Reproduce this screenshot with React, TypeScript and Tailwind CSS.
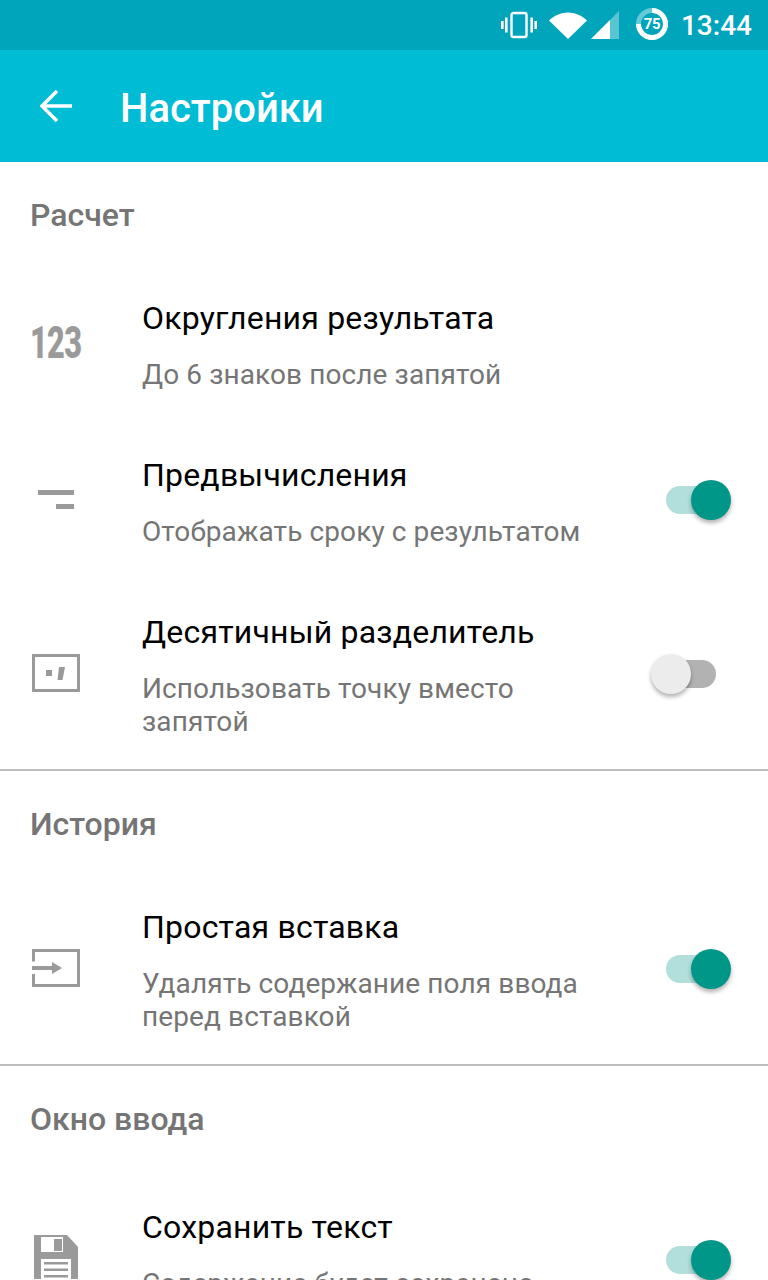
import type { JSX, ReactNode } from 'react';

function Switch({ on, lift }: { on: boolean; lift?: boolean }): JSX.Element {
  return (
    <div className={`relative mr-[52px] h-[28px] w-[50px] shrink-0 rounded-full ${lift ? 'mb-[22px]' : 'mb-[4px]'} ${on ? 'bg-[#b2dfdb]' : 'bg-[#b2b2b2]'}`}>
      <div
        className={`absolute top-[-6px] h-[40px] w-[40px] rounded-full shadow-[0_3px_4px_rgba(0,0,0,0.3)] ${
          on ? 'right-[-15px] bg-[#009688]' : 'left-[-15px] bg-[#ececec]'
        }`}
      />
    </div>
  );
}

function SectionTitle({ children, last }: { children: ReactNode; last?: boolean }): JSX.Element {
  return (
    <div className={`px-[30px] pt-[34px] text-[32px] font-medium leading-[38px] text-[#757575] ${last ? 'pb-[38px]' : 'pb-[33px]'}`}>
      {children}
    </div>
  );
}

function Row({
  icon,
  title,
  sub,
  toggle,
  lift
}: {
  icon: ReactNode;
  title: string;
  sub: string;
  toggle?: boolean;
  lift?: boolean;
}): JSX.Element {
  return (
    <div className="flex items-center pb-[33px] pt-[32px]">
      <div className={`ml-[32px] flex h-[48px] w-[48px] shrink-0 items-center justify-center text-[#9a9a9a] ${lift ? 'mb-[28px]' : 'mb-[5px]'}`}>
        {icon}
      </div>
      <div className="ml-[62px] w-[440px] shrink-0">
        <div className="text-[32px] leading-[38px] tracking-[0.2px] text-black">{title}</div>
        <div className="mt-[21px] text-[28px] leading-[33px] tracking-[0.1px] text-[#757575]">{sub}</div>
      </div>
      {toggle !== undefined ? (
        <div className="ml-auto">
          <Switch on={toggle} lift={lift} />
        </div>
      ) : null}
    </div>
  );
}

function StatusIcons(): JSX.Element {
  return (
    <div className="flex h-[50px] items-center justify-end bg-[#00a5bb] pr-[16px] text-white">
      <svg width="36" height="28" viewBox="0 0 36 28" fill="none">
        <rect x="10.5" y="2" width="15" height="24" rx="2" stroke="white" strokeWidth="2.4" />
        <rect x="0" y="10" width="2.6" height="8" fill="white" />
        <rect x="4" y="6.5" width="2.6" height="15" fill="white" />
        <rect x="29.4" y="6.5" width="2.6" height="15" fill="white" />
        <rect x="33.4" y="10" width="2.6" height="8" fill="white" />
      </svg>
      <svg className="ml-[12px]" width="38" height="28" viewBox="0 0 38 28">
        <path d="M0 9.5C5 4.5 12 1.5 19 1.5S33 4.5 38 9.5L19 28Z" fill="white" />
      </svg>
      <svg className="ml-[4px]" width="28" height="28" viewBox="0 0 28 28">
        <path d="M0 28L28 0V28Z" fill="white" fillOpacity="0.35" />
        <path d="M0 28L19 9V28Z" fill="white" />
      </svg>
      <div className="relative mb-[2px] ml-[17px] h-[32px] w-[32px] shrink-0">
        <svg width="32" height="32" viewBox="0 0 32 32" fill="none">
          <circle cx="16" cy="16" r="13.5" stroke="white" strokeOpacity="0.4" strokeWidth="5" />
          <path d="M16 2.5A13.5 13.5 0 1 1 2.5 16" stroke="white" strokeWidth="5" />
        </svg>
        <span className="absolute inset-0 flex items-center justify-center text-[15px] font-bold tracking-[-0.5px] text-white">75</span>
      </div>
      <span className="ml-[13px] mt-[2px] text-[28px] font-medium leading-[48px]">13:44</span>
    </div>
  );
}

export default function App(): JSX.Element {
  return (
    <div className="h-[1280px] w-[768px] overflow-hidden bg-white font-['Roboto',sans-serif]">
      <StatusIcons />
      <div className="flex h-[112px] items-center bg-[#00bcd4] text-white">
        <svg className="ml-[40px]" width="32" height="32" viewBox="0 0 32 32" fill="none" stroke="white" strokeWidth="3.5">
          <path d="M32 16H2" />
          <path d="M17 1L2 16L17 31" />
        </svg>
        <span className="ml-[48px] mt-[5px] text-[40px] font-medium leading-none">Настройки</span>
      </div>

      <SectionTitle>Расчет</SectionTitle>
      <Row
        icon={<span className="scale-x-[0.68] text-[45px] font-black leading-none tracking-[-1px]">123</span>}
        title="Округления результата"
        sub="До 6 знаков после запятой"
      />
      <Row
        icon={
          <svg width="36" height="20" viewBox="0 0 36 20" fill="#9a9a9a">
            <rect x="0" y="0" width="36" height="5" />
            <rect x="18" y="14" width="18" height="5" />
          </svg>
        }
        title="Предвычисления"
        sub="Отображать сроку с результатом"
        toggle
      />
      <Row
        icon={
          <svg width="48" height="38" viewBox="0 0 48 38" fill="none">
            <rect x="1.5" y="1.5" width="45" height="35" stroke="#9a9a9a" strokeWidth="3" />
            <rect x="14" y="16" width="6" height="6" fill="#9a9a9a" />
            <path d="M27 13H33L30.5 26H25.5Z" fill="#9a9a9a" />
          </svg>
        }
        title="Десятичный разделитель"
        sub="Использовать точку вместо запятой"
        toggle={false}
      />
      <div className="-mt-[2px] h-[2px] bg-[#bdbdbd]" />

      <SectionTitle>История</SectionTitle>
      <Row
        icon={
          <svg width="48" height="38" viewBox="0 0 48 38" fill="none">
            <path d="M1.5 12.5V1.5H46.5V36.5H1.5V25" stroke="#9a9a9a" strokeWidth="3" />
            <path d="M0 17H20V13L30 19L20 25V21H0Z" fill="#9a9a9a" />
          </svg>
        }
        title="Простая вставка"
        sub="Удалять содержание поля ввода перед вставкой"
        toggle
      />
      <div className="-mt-[2px] h-[2px] bg-[#bdbdbd]" />

      <SectionTitle last>Окно ввода</SectionTitle>
      <Row
        icon={
          <svg width="44" height="44" viewBox="0 0 44 44">
            <path d="M0 0H33L44 12V44H0Z" fill="#9a9a9a" />
            <rect x="7" y="2" width="22" height="15" fill="white" />
            <rect x="20" y="4" width="8" height="12" fill="#9a9a9a" />
            <rect x="7" y="24" width="30" height="20" fill="white" />
            <rect x="10" y="27" width="24" height="2.5" fill="#9a9a9a" />
            <rect x="10" y="33.5" width="24" height="2.5" fill="#9a9a9a" />
            <rect x="10" y="40" width="24" height="2.5" fill="#9a9a9a" />
          </svg>
        }
        lift
        title="Сохранить текст"
        sub="Содержание будет сохранено при выходе из приложения"
        toggle
      />
    </div>
  );
}
